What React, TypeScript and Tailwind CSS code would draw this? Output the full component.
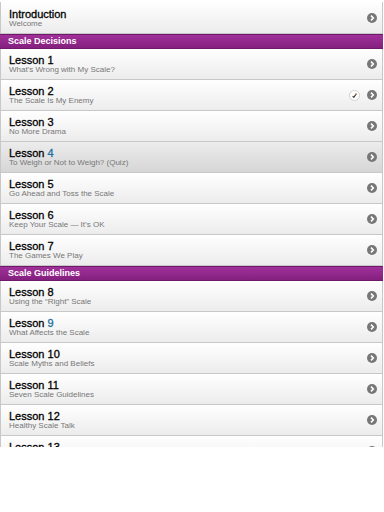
import React from 'react';

type Lesson = { title: string; num?: string; sub: string; checked?: boolean; active?: boolean; blue?: boolean };

const decisions: Lesson[] = [
  { title: 'Lesson', num: '1', sub: "What's Wrong with My Scale?" },
  { title: 'Lesson', num: '2', sub: 'The Scale Is My Enemy', checked: true },
  { title: 'Lesson', num: '3', sub: 'No More Drama' },
  { title: 'Lesson', num: '4', sub: 'To Weigh or Not to Weigh? (Quiz)', active: true, blue: true },
  { title: 'Lesson', num: '5', sub: 'Go Ahead and Toss the Scale' },
  { title: 'Lesson', num: '6', sub: 'Keep Your Scale — It\u2019s OK' },
  { title: 'Lesson', num: '7', sub: 'The Games We Play' },
];

const guidelines: Lesson[] = [
  { title: 'Lesson', num: '8', sub: 'Using the \u201cRight\u201d Scale' },
  { title: 'Lesson', num: '9', sub: 'What Affects the Scale', blue: true },
  { title: 'Lesson', num: '10', sub: 'Scale Myths and Beliefs' },
  { title: 'Lesson', num: '11', sub: 'Seven Scale Guidelines' },
  { title: 'Lesson', num: '12', sub: 'Healthy Scale Talk' },
  { title: 'Lesson', num: '13', sub: 'Weighing In' },
];

const Chevron = () => (
  <svg width="10" height="10" viewBox="0 0 10 10" className="shrink-0">
    <circle cx="5" cy="5" r="5" fill="#777" />
    <path d="M4 2.6 L6.3 5 L4 7.4" fill="none" stroke="#fff" strokeWidth="1.6" />
  </svg>
);

const Check = () => (
  <svg width="11" height="11" viewBox="0 0 11 11" className="shrink-0 mr-[7px]">
    <circle cx="5.5" cy="5.5" r="5" fill="#fff" stroke="#cfcfcf" />
    <path d="M3.6 6 L4.8 7.3 L7.4 3.6" fill="none" stroke="#333" strokeWidth="1.1" />
    <path d="M6.6 4.6 L7.4 3.6" stroke="#e08a2c" strokeWidth="1.1" />
  </svg>
);

const Row = ({ item, intro }: { item: Lesson; intro?: boolean }) => (
  <div
    className={`flex items-center border border-t-0 border-[#c8c8c8] pl-[8px] pr-[5px] ${
      intro ? 'h-[32px] border-t' : 'h-[31px]'
    } ${
      item.active
        ? 'bg-gradient-to-b from-[#ececec] to-[#d6d6d6]'
        : 'bg-gradient-to-b from-[#ffffff] to-[#ececec]'
    }`}
  >
    <div className="flex-1 flex flex-col pt-[1px]">
      <span className="text-[11px] leading-[10px] text-black [-webkit-text-stroke:0.3px_currentColor]">
        {item.title}
        {item.num && (
          <>
            {' '}
            <span className={item.blue ? 'text-[#1f6f9f]' : ''}>{item.num}</span>
          </>
        )}
      </span>
      <span className="text-[8px] leading-[9px] text-[#777]">{item.sub}</span>
    </div>
    {item.checked && <Check />}
    <Chevron />
  </div>
);

const Header = ({ label }: { label: string }) => (
  <div className="h-[15px] flex items-center pl-[8px] bg-gradient-to-b from-[#a0309a] to-[#84207e] border-y border-[#6e1a68] text-white text-[9px] font-bold">
    {label}
  </div>
);

const App: React.FC = () => {
  return (
    <div className="w-[384px] h-[512px] bg-white" style={{ fontFamily: '"Liberation Sans", Arial, sans-serif' }}>
      <div className="h-[447px] overflow-hidden pt-[2px] pr-[1px]">
        <Row item={{ title: 'Introduction', sub: 'Welcome' }} intro />
        <Header label="Scale Decisions" />
        {decisions.map((l) => (
          <Row key={l.num} item={l} />
        ))}
        <Header label="Scale Guidelines" />
        {guidelines.map((l) => (
          <Row key={l.num} item={l} />
        ))}
      </div>
    </div>
  );
};

export default App;
